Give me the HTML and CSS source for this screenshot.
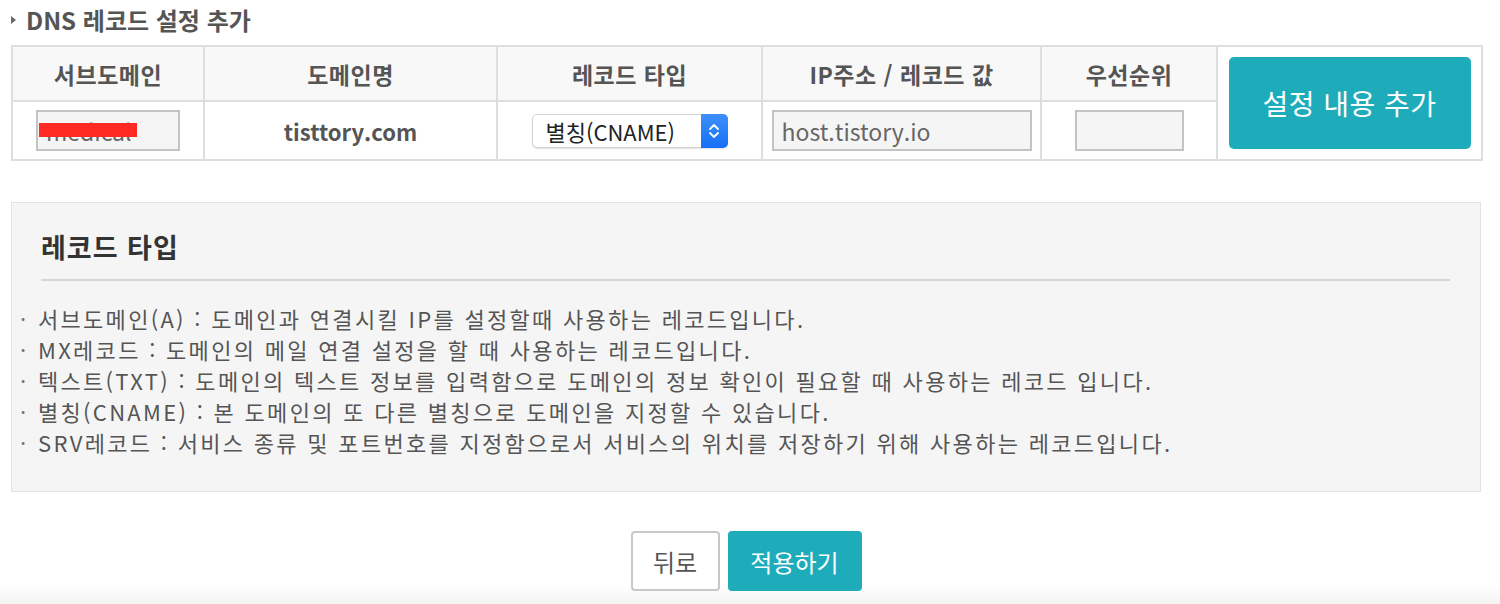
FILE: index.html
```html
<!DOCTYPE html>
<html lang="ko">
<head>
<meta charset="utf-8">
<link rel="stylesheet" href="styles.css">
</head>
<body>
<div class="page">
  <h2 class="title"><span class="tri"></span>DNS 레코드 설정 추가</h2>
  <table class="dns">
    <colgroup>
      <col style="width:192px"><col style="width:293px"><col style="width:265px"><col style="width:279px"><col style="width:176px"><col style="width:265px">
    </colgroup>
    <tr class="head">
      <th>서브도메인</th>
      <th>도메인명</th>
      <th>레코드 타입</th>
      <th>IP주소 / 레코드 값</th>
      <th>우선순위</th>
      <td rowspan="2" class="btncell"><button class="add">설정 내용 추가</button></td>
    </tr>
    <tr class="body">
      <td><span class="redwrap"><input class="inp sub" value="medical"><span class="redact"></span></span></td>
      <td class="domain">tisttory.com</td>
      <td>
        <span class="selwrap">
          <select class="sel"><option>별칭(CNAME)</option></select>
          <span class="arrow"><svg width="14" height="20" viewBox="0 0 14 20"><path d="M3 8 L7 4 L11 8 M3 12 L7 16 L11 12" fill="none" stroke="#fff" stroke-width="1.8" stroke-linecap="round" stroke-linejoin="round"/></svg></span>
        </span>
      </td>
      <td><input class="inp ip" placeholder="host.tistory.io"></td>
      <td><input class="inp pri"></td>
    </tr>
  </table>

  <div class="info">
    <h3>레코드 타입</h3>
    <ul>
      <li>서브도메인(A) : 도메인과 연결시킬 IP를 설정할때 사용하는 레코드입니다.</li>
      <li>MX레코드 : 도메인의 메일 연결 설정을 할 때 사용하는 레코드입니다.</li>
      <li>텍스트(TXT) : 도메인의 텍스트 정보를 입력함으로 도메인의 정보 확인이 필요할 때 사용하는 레코드 입니다.</li>
      <li>별칭(CNAME) : 본 도메인의 또 다른 별칭으로 도메인을 지정할 수 있습니다.</li>
      <li>SRV레코드 : 서비스 종류 및 포트번호를 지정함으로서 서비스의 위치를 저장하기 위해 사용하는 레코드입니다.</li>
    </ul>
  </div>

  <div class="actions">
    <button class="back">뒤로</button>
    <button class="apply">적용하기</button>
  </div>
</div>
</body>
</html>
```
FILE: styles.css
```css
html, body { margin: 0; padding: 0; }
body {
  background: linear-gradient(#fff 0, #fff 585px, #f4f4f4 604px);
  min-height: 604px;
  font-family: "Noto Sans CJK KR", "Noto Sans", sans-serif;
  color: #555;
}
.page { padding: 0 19px 0 11px; }
.title {
  margin: 0;
  height: 45px;
  display: flex;
  align-items: center;
  box-sizing: border-box;
  font-size: 24px;
  font-weight: 700;
  color: #555;
  line-height: 1;
  padding-bottom: 6px;
}
.tri {
  display: inline-block;
  width: 0; height: 0;
  border-left: 5px solid #666;
  border-top: 4px solid transparent;
  border-bottom: 4px solid transparent;
  margin: 0 10px 0 0;
}
.dns {
  width: 1470px;
  border-collapse: collapse;
  table-layout: fixed;
  border: 2px solid #dcdedf;
}
.dns th, .dns td {
  border: 2px solid #dcdedf;
  text-align: center;
  padding: 0;
}
.head th {
  height: 53px;
  background: #f8f8f8;
  font-size: 23px;
  font-weight: 700;
  color: #555;
  letter-spacing: 0.5px;
}
.body td { height: 57px; }
.btncell { background: #fff; }
.add {
  width: 242px; height: 92px;
  background: #1eacbb;
  border: 0; border-radius: 5px;
  color: #fff;
  font-family: inherit;
  font-size: 28px;
  letter-spacing: 0.5px;
}
.inp {
  box-sizing: border-box;
  height: 41px;
  background: #f5f5f5;
  border: 2px solid #c3c3c3;
  font-family: "Noto Sans CJK KR", sans-serif;
  font-size: 23px;
  color: #666;
  padding: 0 8px;
  vertical-align: middle;
}
.inp::placeholder { color: #666; }
.sub { width: 144px; }
.ip { width: 260px; }
.pri { width: 109px; }
.redwrap { position: relative; display: inline-block; vertical-align: middle; }
.redact {
  position: absolute;
  left: 3px; top: 13px;
  width: 98px; height: 14px;
  background: #ff2a22;
}
.domain { font-size: 22px; font-weight: 700; color: #555; }
.selwrap { position: relative; display: inline-block; vertical-align: middle; }
.sel {
  appearance: none;
  -webkit-appearance: none;
  width: 196px; height: 34px;
  border: 1px solid #d3d3d3;
  border-radius: 5px;
  background: #fff;
  font-family: "Noto Sans CJK KR", sans-serif;
  font-size: 22px;
  color: #222;
  padding: 0 0 0 13px;
  box-shadow: 0 1px 1px rgba(0,0,0,0.12);
}
.arrow {
  position: absolute;
  right: 0; top: 0;
  width: 27px; height: 34px;
  background: linear-gradient(#3e8ff8, #1670f6);
  border-radius: 0 5px 5px 0;
  display: flex; align-items: center; justify-content: center;
}
.info {
  margin-top: 41px;
  width: 1470px;
  box-sizing: border-box;
  background: #f5f5f5;
  border: 1px solid #e3e3e3;
  padding: 24px 30px 30px 29px;
  height: 290px;
}
.info h3 {
  margin: 0;
  font-size: 27px;
  font-weight: 700;
  color: #333;
  letter-spacing: 1px;
  padding-bottom: 12px;
  border-bottom: 2px solid #d6d6d6;
  line-height: 40px;
}
.info ul {
  list-style: none;
  margin: 22px 0 0 -21px;
  padding: 0;
}
.info li {
  font-size: 22px;
  line-height: 31px;
  color: #555;
  letter-spacing: 2.3px;
  white-space: nowrap;
}
.info li::before {
  content: "·";
  display: inline-block;
  width: 18px;
  letter-spacing: 0;
  text-align: left;
  color: #777;
}
.actions {
  display: flex;
  justify-content: center;
  gap: 8px;
  margin-top: 39px;
}
.actions button {
  height: 60px;
  border-radius: 4px;
  font-family: inherit;
  font-size: 24px;
}
.back {
  width: 89px;
  background: #fff;
  border: 2px solid #c8c8c8;
  color: #555;
}
.apply {
  width: 134px;
  background: #1eacbb;
  border: 0;
  color: #fff;
}
```
